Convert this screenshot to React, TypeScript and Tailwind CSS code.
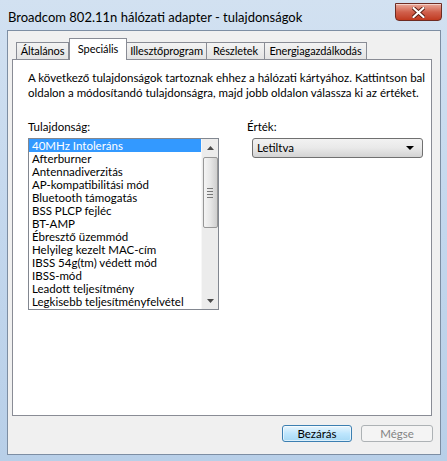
const items = [
  "40MHz Intoleráns",
  "Afterburner",
  "Antennadiverzitás",
  "AP-kompatibilitási mód",
  "Bluetooth támogatás",
  "BSS PLCP fejléc",
  "BT-AMP",
  "Ébresztő üzemmód",
  "Helyileg kezelt MAC-cím",
  "IBSS 54g(tm) védett mód",
  "IBSS-mód",
  "Leadott teljesítmény",
  "Legkisebb teljesítményfelvétel",
];

function Tab({ label, w, selected }: { label: string; w: number; selected?: boolean }) {
  if (selected) {
    return (
      <div
        className="relative z-10 -mb-px flex h-[22px] shrink-0 items-start justify-center whitespace-nowrap border border-b-0 border-[#898c95] bg-white pt-[3px] text-[11px] leading-[14px] tracking-[-0.1px] text-black"
        style={{ width: w }}
      >
        {label}
      </div>
    );
  }
  return (
    <div
      className="-ml-px flex h-[17px] shrink-0 items-center justify-center whitespace-nowrap border border-b-0 border-[#898c95] bg-gradient-to-b from-[#f3f3f3] to-[#e3e3e3] text-[11px] leading-[14px] tracking-[-0.1px] text-black first:ml-0"
      style={{ width: w }}
    >
      {label}
    </div>
  );
}

function Triangle({ up }: { up?: boolean }) {
  return (
    <svg width="7" height="4" viewBox="0 0 7 4">
      {up ? <path d="M0 4 L3.5 0 L7 4 Z" fill="#4a4a4a" /> : <path d="M0 0 L7 0 L3.5 4 Z" fill="#4a4a4a" />}
    </svg>
  );
}

export default function App() {
  return (
    <div
      className="flex h-[461px] w-[447px] flex-col overflow-hidden bg-gradient-to-b from-[#d2e1f1] via-[#c3d7ed] to-[#b8cfe8] text-black"
      style={{ fontFamily: "Lato, 'Liberation Sans', sans-serif" }}
    >
      {/* Title bar */}
      <div className="flex h-[30px] shrink-0 items-start justify-between">
        <div className="pl-[8px] pt-[10px] text-[13px] leading-[15px] text-black">
          Broadcom 802.11n hálózati adapter - tulajdonságok
        </div>
        <div className="mr-[5px] mt-[3px] flex h-[18px] w-[47px] items-center justify-center rounded-b-[4px] border border-[#6e2b22] bg-gradient-to-b from-[#e9a99b] via-[#d0604c] to-[#c0391e] shadow-[inset_0_1px_0_rgba(255,255,255,0.5)]">
          <svg width="13" height="11" viewBox="0 0 13 11">
            <path d="M1.5 1 L11.5 10 M11.5 1 L1.5 10" stroke="#5a1d12" strokeWidth="4" strokeLinecap="round" />
            <path d="M1.5 1 L11.5 10 M11.5 1 L1.5 10" stroke="#ffffff" strokeWidth="2.2" strokeLinecap="round" />
          </svg>
        </div>
      </div>

      {/* Client area */}
      <div className="ml-[7px] mr-[6px] flex h-[425px] shrink-0 flex-col border border-[#7d8ea3] bg-[#f0f0f0]">
        {/* Tabs */}
        <div className="ml-[4px] mr-[8px] mt-[7px] flex flex-col">
          <div className="flex h-[21px] items-end pl-[4px]">
            <Tab label="Általános" w={53} />
            <Tab label="Speciális" w={58} selected />
            <Tab label="Illesztőprogram" w={81} />
            <Tab label="Részletek" w={59} />
            <Tab label="Energiagazdálkodás" w={103} />
          </div>
          <div className="flex h-[357px] flex-col border border-[#898c95] bg-white pl-[15px] text-[11.5px]">
            <div className="mt-[10px] whitespace-nowrap leading-[15px]">
              A következő tulajdonságok tartoznak ehhez a hálózati kártyához. Kattintson bal
              <br />
              oldalon a módosítandó tulajdonságra, majd jobb oldalon válassza ki az értéket.
            </div>
            <div className="mt-[19px] flex">
              {/* Left column */}
              <div className="flex w-[191px] flex-col">
                <div className="h-[15px] leading-[15px]">Tulajdonság:</div>
                <div className="mt-[4px] flex h-[172px] border border-[#828790] bg-white">
                  <div className="flex flex-1 flex-col">
                    {items.map((it, i) => (
                      <div
                        key={it}
                        className={
                          i === 0
                            ? "h-[13px] whitespace-nowrap bg-[#3399ff] pl-[3px] leading-[13px] text-white"
                            : "h-[13px] whitespace-nowrap pl-[3px] leading-[13px] text-black"
                        }
                      >
                        {it}
                      </div>
                    ))}
                  </div>
                  <div className="flex w-[17px] flex-col items-center border-l border-[#f7f7f7] bg-[#ececec]">
                    <div className="flex h-[18px] items-center justify-center">
                      <Triangle up />
                    </div>
                    <div className="flex h-[71px] w-[15px] flex-col items-center justify-center gap-[2px] rounded-[2px] border border-[#979797] bg-gradient-to-r from-[#f4f4f4] via-[#e6e6e6] to-[#cfcfcf]">
                      <div className="h-px w-[6px] bg-[#777]" />
                      <div className="h-px w-[6px] bg-[#777]" />
                      <div className="h-px w-[6px] bg-[#777]" />
                      <div className="h-px w-[6px] bg-[#777]" />
                    </div>
                    <div className="flex-1" />
                    <div className="flex h-[17px] items-center justify-center">
                      <Triangle />
                    </div>
                  </div>
                </div>
              </div>
              {/* Right column */}
              <div className="ml-[28px] flex flex-col">
                <div className="h-[15px] leading-[15px]">Érték:</div>
                <div className="ml-[5px] mt-[4px] flex h-[20px] w-[171px] items-center justify-between rounded-[3px] border border-[#707070] bg-gradient-to-b from-[#f2f2f2] via-[#e9e9e9] to-[#d3d3d3] pl-[4px] pr-[8px]">
                  <span className="leading-[14px]">Letiltva</span>
                  <svg width="8" height="4" viewBox="0 0 8 4">
                    <path d="M0 0 L8 0 L4 4 Z" fill="#000" />
                  </svg>
                </div>
              </div>
            </div>
          </div>
        </div>

        {/* Buttons */}
        <div className="mr-[7px] mt-[9px] flex justify-end gap-[9px] text-[11.5px]">
          <div className="flex h-[17px] w-[70px] items-center justify-center rounded-[3px] border border-[#3c7fb1] bg-gradient-to-b from-[#eaf6fd] via-[#bee6fd] to-[#a7d9f5] shadow-[inset_0_0_0_1px_rgba(255,255,255,0.6)]">
            Bezárás
          </div>
          <div className="flex h-[17px] w-[72px] items-center justify-center rounded-[3px] border border-[#adb2b5] bg-[#f4f4f4] text-[#838383]">
            Mégse
          </div>
        </div>
      </div>
    </div>
  );
}
